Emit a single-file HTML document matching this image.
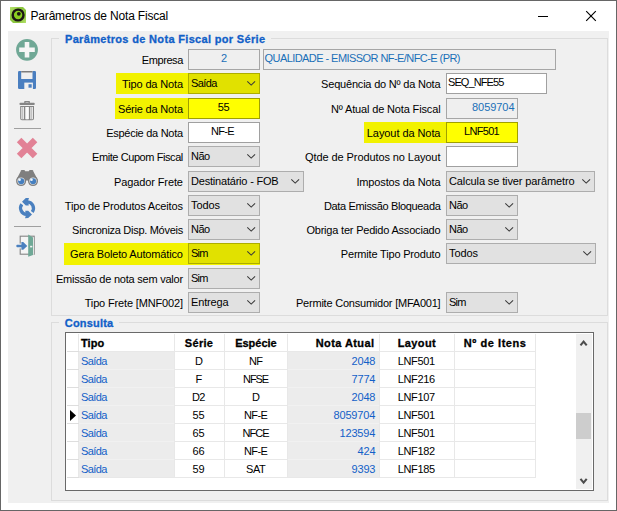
<!DOCTYPE html>
<html><head><meta charset="utf-8"><title>Parâmetros de Nota Fiscal</title>
<style>
html,body{margin:0;padding:0;}
body{width:617px;height:511px;overflow:hidden;background:#fff;font-family:"Liberation Sans",sans-serif;font-size:11px;color:#000;position:relative;}
.a{position:absolute;box-sizing:border-box;}
.win{left:0;top:0;width:617px;height:511px;border:1px solid #666;background:#fff;}
.client{left:8px;top:31px;width:601px;height:472px;background:#f0f0f0;}
.gb{border:1px solid #dcdcdc;}
.t{position:absolute;white-space:nowrap;height:14px;line-height:14px;}
.b{font-weight:bold;-webkit-text-stroke:0.3px;}
.fld{border:1px solid #a0a0a0;background:#fff;height:21px;}
.dis{background:#efefef;border-color:#a6a6a6;}
.cmb{border:1px solid #adadad;background:#e1e1e1;height:21px;}
.hl{background:#f2f200;}
.blue{color:#1260c8;}
.fblue{color:#1a6fb8;}
svg{position:absolute;overflow:visible;}
</style></head>
<body>
<div class="a win"></div>
<div class="a client"></div>
<div class="t" style="left:30.5px;top:9px;letter-spacing:-0.181px;font-size:12px;">Parâmetros de Nota Fiscal</div>
<svg style="left:10px;top:7px" width="16" height="16" viewBox="0 0 16 16"><defs><linearGradient id="ag" x1="0" y1="0" x2="1" y2="1"><stop offset="0" stop-color="#b6e26c"/><stop offset="0.35" stop-color="#8cc63f"/><stop offset="0.7" stop-color="#8cc63f"/><stop offset="1" stop-color="#b6e26c"/></linearGradient></defs><path d="M0 0 H13 L16 3 V16 H3 L0 13 Z" fill="url(#ag)"/><circle cx="8.1" cy="8" r="5.4" fill="#8ace20" stroke="#1c1614" stroke-width="2.4"/><circle cx="8.8" cy="6.8" r="1.9" fill="#1c1614"/></svg>
<div class="a" style="left:538px;top:16px;width:10px;height:1px;background:#000"></div>
<svg style="left:586px;top:11px" width="10" height="10" viewBox="0 0 10 10"><path d="M0.2 0.2 L9.8 9.8 M9.8 0.2 L0.2 9.8" stroke="#000" stroke-width="1.15" fill="none"/></svg>
<div class="a gb" style="left:51px;top:38px;width:557px;height:278px"></div>
<div class="a" style="left:59px;top:36px;width:212px;height:5px;background:#f0f0f0"></div>
<div class="t b blue" style="left:65.0px;top:32px;letter-spacing:0.328px;">Parâmetros de Nota Fiscal por Série</div>
<div class="a gb" style="left:51px;top:322px;width:557px;height:179px"></div>
<div class="a" style="left:59px;top:320px;width:60px;height:5px;background:#f0f0f0"></div>
<div class="t b blue" style="left:64.8px;top:316px;letter-spacing:0.192px;">Consulta</div>
<div class="t" style="left:141.8px;top:53px;letter-spacing:-0.419px;">Empresa</div>
<div class="a fld dis" style="left:188px;top:49px;width:72px;"></div>
<div class="t fblue" style="left:221.0px;top:51px;letter-spacing:-0.825px;">2</div>
<div class="a fld dis" style="left:263px;top:49px;width:293px;"></div>
<div class="t fblue" style="left:264.5px;top:51px;letter-spacing:-0.562px;">QUALIDADE - EMISSOR NF-E/NFC-E (PR)</div>
<div class="a hl" style="left:116px;top:73px;width:144px;height:21px"></div>
<div class="t" style="left:122.1px;top:77px;letter-spacing:-0.152px;">Tipo da Nota</div>
<div class="a cmb" style="left:188px;top:73px;width:72px;background:#e1e100;border-color:#adad00;"></div>
<div class="t" style="left:191.0px;top:76px;letter-spacing:-0.576px;">Saída</div>
<svg style="left:246.8px;top:81.30000000000001px" width="8.4" height="4.6" viewBox="0 0 8.4 4.6"><path d="M0.3 0.3 L4.2 4.1 L8.1 0.3" stroke="#3a3a3a" stroke-width="1.05" fill="none"/></svg>
<div class="t" style="left:321.1px;top:77px;letter-spacing:-0.199px;">Sequência do Nº da Nota</div>
<div class="a fld " style="left:446px;top:73px;width:101px;"></div>
<div class="t" style="left:448.0px;top:75px;letter-spacing:-0.903px;">SEQ_NFE55</div>
<div class="a hl" style="left:115px;top:98px;width:145px;height:21px"></div>
<div class="t" style="left:118.0px;top:102px;letter-spacing:-0.186px;">Série da Nota</div>
<div class="a fld " style="left:188px;top:98px;width:72px;background:#ffff00;border-color:#a0a000;"></div>
<div class="t" style="left:217.8px;top:100px;letter-spacing:-0.375px;">55</div>
<div class="t" style="left:331.0px;top:102px;letter-spacing:-0.148px;">Nº Atual de Nota Fiscal</div>
<div class="a fld dis" style="left:446px;top:98px;width:72px;"></div>
<div class="t fblue" style="left:472.0px;top:100px;letter-spacing:-0.054px;">8059704</div>
<div class="t" style="left:106.2px;top:126px;letter-spacing:-0.272px;">Espécie da Nota</div>
<div class="a fld " style="left:188px;top:122px;width:72px;"></div>
<div class="t" style="left:211.0px;top:124px;letter-spacing:-0.714px;">NF-E</div>
<div class="a hl" style="left:364px;top:122px;width:154px;height:21px"></div>
<div class="t" style="left:366.8px;top:126px;letter-spacing:-0.071px;">Layout da Nota</div>
<div class="a fld " style="left:446px;top:122px;width:72px;background:#ffff00;border-color:#a0a000;"></div>
<div class="t" style="left:464.0px;top:124px;letter-spacing:-0.693px;">LNF501</div>
<div class="t" style="left:92.0px;top:150px;letter-spacing:-0.419px;">Emite Cupom Fiscal</div>
<div class="a cmb" style="left:188px;top:146px;width:72px;"></div>
<div class="t" style="left:191.0px;top:149px;letter-spacing:-0.496px;">Não</div>
<svg style="left:246.8px;top:154.3px" width="8.4" height="4.6" viewBox="0 0 8.4 4.6"><path d="M0.3 0.3 L4.2 4.1 L8.1 0.3" stroke="#3a3a3a" stroke-width="1.05" fill="none"/></svg>
<div class="t" style="left:305.1px;top:150px;letter-spacing:-0.090px;">Qtde de Produtos no Layout</div>
<div class="a fld " style="left:446px;top:146px;width:72px;"></div>
<div class="t" style="left:114.1px;top:175px;letter-spacing:-0.121px;">Pagador Frete</div>
<div class="a cmb" style="left:188px;top:171px;width:116px;"></div>
<div class="t" style="left:191.0px;top:174px;letter-spacing:-0.201px;">Destinatário - FOB</div>
<svg style="left:290.8px;top:179.3px" width="8.4" height="4.6" viewBox="0 0 8.4 4.6"><path d="M0.3 0.3 L4.2 4.1 L8.1 0.3" stroke="#3a3a3a" stroke-width="1.05" fill="none"/></svg>
<div class="t" style="left:356.4px;top:175px;letter-spacing:-0.136px;">Impostos da Nota</div>
<div class="a cmb" style="left:446px;top:171px;width:149px;"></div>
<div class="t" style="left:449.0px;top:174px;letter-spacing:-0.113px;">Calcula se tiver parâmetro</div>
<svg style="left:581.8px;top:179.3px" width="8.4" height="4.6" viewBox="0 0 8.4 4.6"><path d="M0.3 0.3 L4.2 4.1 L8.1 0.3" stroke="#3a3a3a" stroke-width="1.05" fill="none"/></svg>
<div class="t" style="left:64.8px;top:199px;letter-spacing:-0.162px;">Tipo de Produtos Aceitos</div>
<div class="a cmb" style="left:188px;top:195px;width:72px;"></div>
<div class="t" style="left:191.0px;top:198px;letter-spacing:-0.075px;">Todos</div>
<svg style="left:246.8px;top:203.3px" width="8.4" height="4.6" viewBox="0 0 8.4 4.6"><path d="M0.3 0.3 L4.2 4.1 L8.1 0.3" stroke="#3a3a3a" stroke-width="1.05" fill="none"/></svg>
<div class="t" style="left:324.0px;top:199px;letter-spacing:-0.351px;">Data Emissão Bloqueada</div>
<div class="a cmb" style="left:446px;top:195px;width:72px;"></div>
<div class="t" style="left:449.0px;top:198px;letter-spacing:-0.496px;">Não</div>
<svg style="left:504.8px;top:203.3px" width="8.4" height="4.6" viewBox="0 0 8.4 4.6"><path d="M0.3 0.3 L4.2 4.1 L8.1 0.3" stroke="#3a3a3a" stroke-width="1.05" fill="none"/></svg>
<div class="t" style="left:72.1px;top:223px;letter-spacing:-0.287px;">Sincroniza Disp. Móveis</div>
<div class="a cmb" style="left:188px;top:219px;width:72px;"></div>
<div class="t" style="left:191.0px;top:222px;letter-spacing:-0.496px;">Não</div>
<svg style="left:246.8px;top:227.3px" width="8.4" height="4.6" viewBox="0 0 8.4 4.6"><path d="M0.3 0.3 L4.2 4.1 L8.1 0.3" stroke="#3a3a3a" stroke-width="1.05" fill="none"/></svg>
<div class="t" style="left:306.4px;top:223px;letter-spacing:-0.201px;">Obriga ter Pedido Associado</div>
<div class="a cmb" style="left:446px;top:219px;width:72px;"></div>
<div class="t" style="left:449.0px;top:222px;letter-spacing:-0.496px;">Não</div>
<svg style="left:504.8px;top:227.3px" width="8.4" height="4.6" viewBox="0 0 8.4 4.6"><path d="M0.3 0.3 L4.2 4.1 L8.1 0.3" stroke="#3a3a3a" stroke-width="1.05" fill="none"/></svg>
<div class="a hl" style="left:64px;top:243px;width:196px;height:22px"></div>
<div class="t" style="left:70.0px;top:247px;letter-spacing:-0.153px;">Gera Boleto Automático</div>
<div class="a cmb" style="left:188px;top:243px;width:72px;background:#e1e100;border-color:#adad00;"></div>
<div class="t" style="left:191.0px;top:246px;letter-spacing:-0.812px;">Sim</div>
<svg style="left:246.8px;top:251.3px" width="8.4" height="4.6" viewBox="0 0 8.4 4.6"><path d="M0.3 0.3 L4.2 4.1 L8.1 0.3" stroke="#3a3a3a" stroke-width="1.05" fill="none"/></svg>
<div class="t" style="left:340.8px;top:247px;letter-spacing:-0.185px;">Permite Tipo Produto</div>
<div class="a cmb" style="left:446px;top:243px;width:150px;"></div>
<div class="t" style="left:449.0px;top:246px;letter-spacing:-0.075px;">Todos</div>
<svg style="left:582.8px;top:251.3px" width="8.4" height="4.6" viewBox="0 0 8.4 4.6"><path d="M0.3 0.3 L4.2 4.1 L8.1 0.3" stroke="#3a3a3a" stroke-width="1.05" fill="none"/></svg>
<div class="t" style="left:56.0px;top:272px;letter-spacing:-0.234px;">Emissão de nota sem valor</div>
<div class="a cmb" style="left:188px;top:268px;width:72px;"></div>
<div class="t" style="left:191.0px;top:271px;letter-spacing:-0.812px;">Sim</div>
<svg style="left:246.8px;top:276.29999999999995px" width="8.4" height="4.6" viewBox="0 0 8.4 4.6"><path d="M0.3 0.3 L4.2 4.1 L8.1 0.3" stroke="#3a3a3a" stroke-width="1.05" fill="none"/></svg>
<div class="t" style="left:84.7px;top:296px;letter-spacing:-0.154px;">Tipo Frete [MNF002]</div>
<div class="a cmb" style="left:188px;top:292px;width:72px;"></div>
<div class="t" style="left:191.0px;top:295px;letter-spacing:-0.152px;">Entrega</div>
<svg style="left:246.8px;top:300.29999999999995px" width="8.4" height="4.6" viewBox="0 0 8.4 4.6"><path d="M0.3 0.3 L4.2 4.1 L8.1 0.3" stroke="#3a3a3a" stroke-width="1.05" fill="none"/></svg>
<div class="t" style="left:296.0px;top:296px;letter-spacing:-0.220px;">Permite Consumidor [MFA001]</div>
<div class="a cmb" style="left:446px;top:292px;width:72px;"></div>
<div class="t" style="left:449.0px;top:295px;letter-spacing:-0.812px;">Sim</div>
<svg style="left:504.8px;top:300.29999999999995px" width="8.4" height="4.6" viewBox="0 0 8.4 4.6"><path d="M0.3 0.3 L4.2 4.1 L8.1 0.3" stroke="#3a3a3a" stroke-width="1.05" fill="none"/></svg>
<div class="a" style="left:65px;top:332px;width:529px;height:159px;border:1px solid #696969;background:#fff"></div>
<div class="a" style="left:78px;top:334px;width:1px;height:143px;background:#e8e8e8"></div>
<div class="a" style="left:174px;top:334px;width:1px;height:143px;background:#e8e8e8"></div>
<div class="a" style="left:224px;top:334px;width:1px;height:143px;background:#e8e8e8"></div>
<div class="a" style="left:287px;top:334px;width:1px;height:143px;background:#e8e8e8"></div>
<div class="a" style="left:379px;top:334px;width:1px;height:143px;background:#e8e8e8"></div>
<div class="a" style="left:454px;top:334px;width:1px;height:143px;background:#e8e8e8"></div>
<div class="a" style="left:535px;top:334px;width:1px;height:143px;background:#e8e8e8"></div>
<div class="a" style="left:67px;top:351px;width:469px;height:1px;background:#e8e8e8"></div>
<div class="a" style="left:67px;top:351px;width:12px;height:1px;background:#dedede"></div>
<div class="a" style="left:67px;top:369px;width:469px;height:1px;background:#e8e8e8"></div>
<div class="a" style="left:67px;top:369px;width:12px;height:1px;background:#dedede"></div>
<div class="a" style="left:67px;top:387px;width:469px;height:1px;background:#e8e8e8"></div>
<div class="a" style="left:67px;top:387px;width:12px;height:1px;background:#dedede"></div>
<div class="a" style="left:67px;top:405px;width:469px;height:1px;background:#e8e8e8"></div>
<div class="a" style="left:67px;top:405px;width:12px;height:1px;background:#dedede"></div>
<div class="a" style="left:67px;top:423px;width:469px;height:1px;background:#e8e8e8"></div>
<div class="a" style="left:67px;top:423px;width:12px;height:1px;background:#dedede"></div>
<div class="a" style="left:67px;top:441px;width:469px;height:1px;background:#e8e8e8"></div>
<div class="a" style="left:67px;top:441px;width:12px;height:1px;background:#dedede"></div>
<div class="a" style="left:67px;top:459px;width:469px;height:1px;background:#e8e8e8"></div>
<div class="a" style="left:67px;top:459px;width:12px;height:1px;background:#dedede"></div>
<div class="a" style="left:67px;top:477px;width:469px;height:1px;background:#e8e8e8"></div>
<div class="a" style="left:67px;top:477px;width:12px;height:1px;background:#dedede"></div>
<div class="a" style="left:79px;top:352px;width:95px;height:125px;background:#ececec"></div>
<div class="a" style="left:79px;top:369px;width:95px;height:1px;background:#f1f1f1"></div>
<div class="a" style="left:79px;top:387px;width:95px;height:1px;background:#f1f1f1"></div>
<div class="a" style="left:79px;top:405px;width:95px;height:1px;background:#f1f1f1"></div>
<div class="a" style="left:79px;top:423px;width:95px;height:1px;background:#f1f1f1"></div>
<div class="a" style="left:79px;top:441px;width:95px;height:1px;background:#f1f1f1"></div>
<div class="a" style="left:79px;top:459px;width:95px;height:1px;background:#f1f1f1"></div>
<div class="a" style="left:288px;top:352px;width:91px;height:125px;background:#ececec"></div>
<div class="a" style="left:288px;top:369px;width:91px;height:1px;background:#f1f1f1"></div>
<div class="a" style="left:288px;top:387px;width:91px;height:1px;background:#f1f1f1"></div>
<div class="a" style="left:288px;top:405px;width:91px;height:1px;background:#f1f1f1"></div>
<div class="a" style="left:288px;top:423px;width:91px;height:1px;background:#f1f1f1"></div>
<div class="a" style="left:288px;top:441px;width:91px;height:1px;background:#f1f1f1"></div>
<div class="a" style="left:288px;top:459px;width:91px;height:1px;background:#f1f1f1"></div>
<div class="t b" style="left:81.0px;top:336px;letter-spacing:0.071px;">Tipo</div>
<div class="t b" style="left:184.8px;top:336px;letter-spacing:0.312px;">Série</div>
<div class="t b" style="left:235.2px;top:336px;letter-spacing:-0.018px;">Espécie</div>
<div class="t b" style="left:315.7px;top:336px;letter-spacing:0.421px;">Nota Atual</div>
<div class="t b" style="left:397.7px;top:336px;letter-spacing:0.406px;">Layout</div>
<div class="t b" style="left:463.8px;top:336px;letter-spacing:0.554px;">Nº de Itens</div>
<div class="t blue" style="left:81.0px;top:354px;letter-spacing:-0.616px;">Saída</div>
<div class="t" style="left:194.9px;top:354px;letter-spacing:-0.938px;">D</div>
<div class="t" style="left:249.1px;top:354px;letter-spacing:-0.828px;">NF</div>
<div class="t blue" style="left:351.4px;top:354px;letter-spacing:-0.125px;">2048</div>
<div class="t" style="left:397.7px;top:354px;letter-spacing:-0.343px;">LNF501</div>
<div class="t blue" style="left:81.0px;top:372px;letter-spacing:-0.616px;">Saída</div>
<div class="t" style="left:195.4px;top:372px;letter-spacing:-0.719px;">F</div>
<div class="t" style="left:243.1px;top:372px;letter-spacing:-1.086px;">NFSE</div>
<div class="t blue" style="left:351.4px;top:372px;letter-spacing:-0.125px;">7774</div>
<div class="t" style="left:397.7px;top:372px;letter-spacing:-0.343px;">LNF216</div>
<div class="t blue" style="left:81.0px;top:390px;letter-spacing:-0.616px;">Saída</div>
<div class="t" style="left:191.9px;top:390px;letter-spacing:-0.531px;">D2</div>
<div class="t" style="left:252.1px;top:390px;letter-spacing:-0.938px;">D</div>
<div class="t blue" style="left:351.4px;top:390px;letter-spacing:-0.125px;">2048</div>
<div class="t" style="left:397.7px;top:390px;letter-spacing:-0.343px;">LNF107</div>
<div class="t blue" style="left:81.0px;top:408px;letter-spacing:-0.616px;">Saída</div>
<div class="t" style="left:192.4px;top:408px;letter-spacing:-0.125px;">55</div>
<div class="t" style="left:244.1px;top:408px;letter-spacing:-0.664px;">NF-E</div>
<div class="t blue" style="left:333.4px;top:408px;letter-spacing:-0.125px;">8059704</div>
<div class="t" style="left:397.7px;top:408px;letter-spacing:-0.343px;">LNF501</div>
<div class="t blue" style="left:81.0px;top:426px;letter-spacing:-0.616px;">Saída</div>
<div class="t" style="left:192.4px;top:426px;letter-spacing:-0.125px;">65</div>
<div class="t" style="left:242.6px;top:426px;letter-spacing:-0.984px;">NFCE</div>
<div class="t blue" style="left:339.4px;top:426px;letter-spacing:-0.125px;">123594</div>
<div class="t" style="left:397.7px;top:426px;letter-spacing:-0.343px;">LNF501</div>
<div class="t blue" style="left:81.0px;top:444px;letter-spacing:-0.616px;">Saída</div>
<div class="t" style="left:192.4px;top:444px;letter-spacing:-0.125px;">66</div>
<div class="t" style="left:244.1px;top:444px;letter-spacing:-0.664px;">NF-E</div>
<div class="t blue" style="left:357.4px;top:444px;letter-spacing:-0.125px;">424</div>
<div class="t" style="left:397.7px;top:444px;letter-spacing:-0.343px;">LNF182</div>
<div class="t blue" style="left:81.0px;top:462px;letter-spacing:-0.616px;">Saída</div>
<div class="t" style="left:192.4px;top:462px;letter-spacing:-0.125px;">59</div>
<div class="t" style="left:246.1px;top:462px;letter-spacing:-0.531px;">SAT</div>
<div class="t blue" style="left:351.4px;top:462px;letter-spacing:-0.125px;">9393</div>
<div class="t" style="left:397.7px;top:462px;letter-spacing:-0.343px;">LNF185</div>
<svg style="left:70px;top:410px" width="6" height="11" viewBox="0 0 6 11"><path d="M0 0 L6 5.5 L0 11 Z" fill="#000"/></svg>
<div class="a" style="left:576px;top:334px;width:16px;height:155px;background:#f0f0f0"></div>
<div class="a" style="left:576px;top:413px;width:15px;height:26px;background:#cdcdcd"></div>
<svg style="left:0;top:0" width="617" height="511" viewBox="0 0 617 511"><path d="M580.5 345.3 L583.6 341.6 L586.7 345.3" stroke="#4d4d4d" stroke-width="2.1" fill="none"/><path d="M580.5 478.9 L583.6 482.6 L586.7 478.9" stroke="#4d4d4d" stroke-width="2.1" fill="none"/></svg>
<div class="a" style="left:14px;top:128px;width:27px;height:1px;background:#a0a0a0"></div>
<div class="a" style="left:14px;top:226px;width:27px;height:1px;background:#a0a0a0"></div>
<svg style="left:0;top:0" width="50" height="270" viewBox="0 0 50 270">
<!-- plus -->
<circle cx="27" cy="49.8" r="10.9" fill="#70a896"/>
<path d="M24.7 42h4.6v5.5h5.5v4.6h-5.5v5.5h-4.6v-5.5h-5.5v-4.6h5.5z" fill="#f6f6f6"/>
<!-- save -->
<rect x="18" y="71" width="18" height="18" rx="1.2" fill="#4a7fc0"/>
<rect x="21.2" y="71" width="11.3" height="8" fill="#f0f0f0"/>
<rect x="21.2" y="71" width="11.3" height="1.5" fill="#7d7d7d"/>
<rect x="24.3" y="82.6" width="8.6" height="6.4" fill="#f0f0f0"/>
<rect x="28.5" y="84.2" width="3.2" height="3.5" fill="#4a7fc0"/>
<!-- trash -->
<rect x="24.2" y="101.1" width="5.7" height="2.3" rx="0.6" fill="#858585"/>
<rect x="25.5" y="102" width="3.1" height="0.9" fill="#d0d0d0"/>
<rect x="19.5" y="102.8" width="15.2" height="2.2" rx="0.8" fill="#858585"/>
<path d="M20.2 106h13.8v12.4a1.8 1.8 0 0 1-1.8 1.8h-10.2a1.8 1.8 0 0 1-1.8-1.8z" fill="#868686"/>
<rect x="21.2" y="107" width="2.8" height="12.2" fill="#e6e6e6"/>
<rect x="22.2" y="107" width="0.7" height="12.2" fill="#b4b4b4"/>
<rect x="25.2" y="107" width="3.8" height="12.2" fill="#ececec"/>
<rect x="26.1" y="107" width="2" height="12.2" fill="#fbfbfb"/>
<rect x="30.2" y="107" width="2.8" height="12.2" fill="#e6e6e6"/>
<rect x="31.3" y="107" width="0.7" height="12.2" fill="#b4b4b4"/>
<!-- x -->
<path d="M19.1 140.05 L35.05 156 M35.05 140.05 L19.1 156" stroke="#e28296" stroke-width="6.4" fill="none"/>
<!-- binoculars -->
<path d="M20.6 171.4 Q20.6 170 22 170 h1.8 Q25 170 25.2 171.2 h3.6 Q29 170 30.2 170 h1.8 Q33.4 170 33.4 171.4 L37.6 179.5 L33 183 L28.6 181.5 L27.6 180.6 h-1.2 L25.4 181.5 L21 183 L16.4 179.5 Z" fill="#7f7f7f"/>
<circle cx="21.1" cy="181.1" r="5" fill="#7f7f7f"/>
<circle cx="33" cy="181.1" r="5" fill="#7f7f7f"/>
<circle cx="21.1" cy="181.1" r="3.7" fill="#e4e4e4"/>
<circle cx="33" cy="181.1" r="3.7" fill="#e4e4e4"/>
<circle cx="21.2" cy="181.2" r="3.05" fill="#4680c0"/>
<circle cx="33.1" cy="181.2" r="3.05" fill="#4680c0"/>
<circle cx="19.6" cy="179.7" r="1.3" fill="#eef4fa"/>
<circle cx="31.5" cy="179.7" r="1.3" fill="#eef4fa"/>
<!-- refresh -->
<g fill="none" stroke="#4a80bf" stroke-width="3.3">
<path d="M27.5 201.8 A6.35 6.35 0 0 1 32.2 211.9"/>
<path d="M26.5 214.4 A6.35 6.35 0 0 1 21.8 204.3"/>
</g>
<path d="M22 201.7 L25.8 198 L29 197.9 L28 201 L28.8 205.4 L25.8 205.4 Z" fill="#4a80bf"/>
<path d="M32 214.4 L28.2 210.7 L25.2 210.7 L26 215 L25 218.2 L28.2 218.1 Z" fill="#4a80bf"/>
<!-- exit -->
<rect x="20.2" y="236.2" width="14" height="18" fill="#f5f5f5" stroke="#858585" stroke-width="1.1"/>
<rect x="18.8" y="243.6" width="3" height="4.8" fill="#f2f2f2"/>
<path d="M28.2 234.4 L33 237.4 L33 255 L28.2 256.8 Z" fill="#6fa896"/>
<rect x="33" y="237.4" width="0.9" height="17.4" fill="#e8e8e8"/>
<rect x="30.1" y="245.8" width="2.2" height="1.6" fill="#f4f4f4"/>
<rect x="16.4" y="244.7" width="7" height="2.5" rx="0.8" fill="#4a80bf"/>
<path d="M21.4 242 L23.2 242 L27.3 245.95 L23.2 249.8 L21.4 249.8 L21.4 247.2 L23 245.95 L21.4 244.7 Z" fill="#4a80bf"/>
</svg>

</body></html>
